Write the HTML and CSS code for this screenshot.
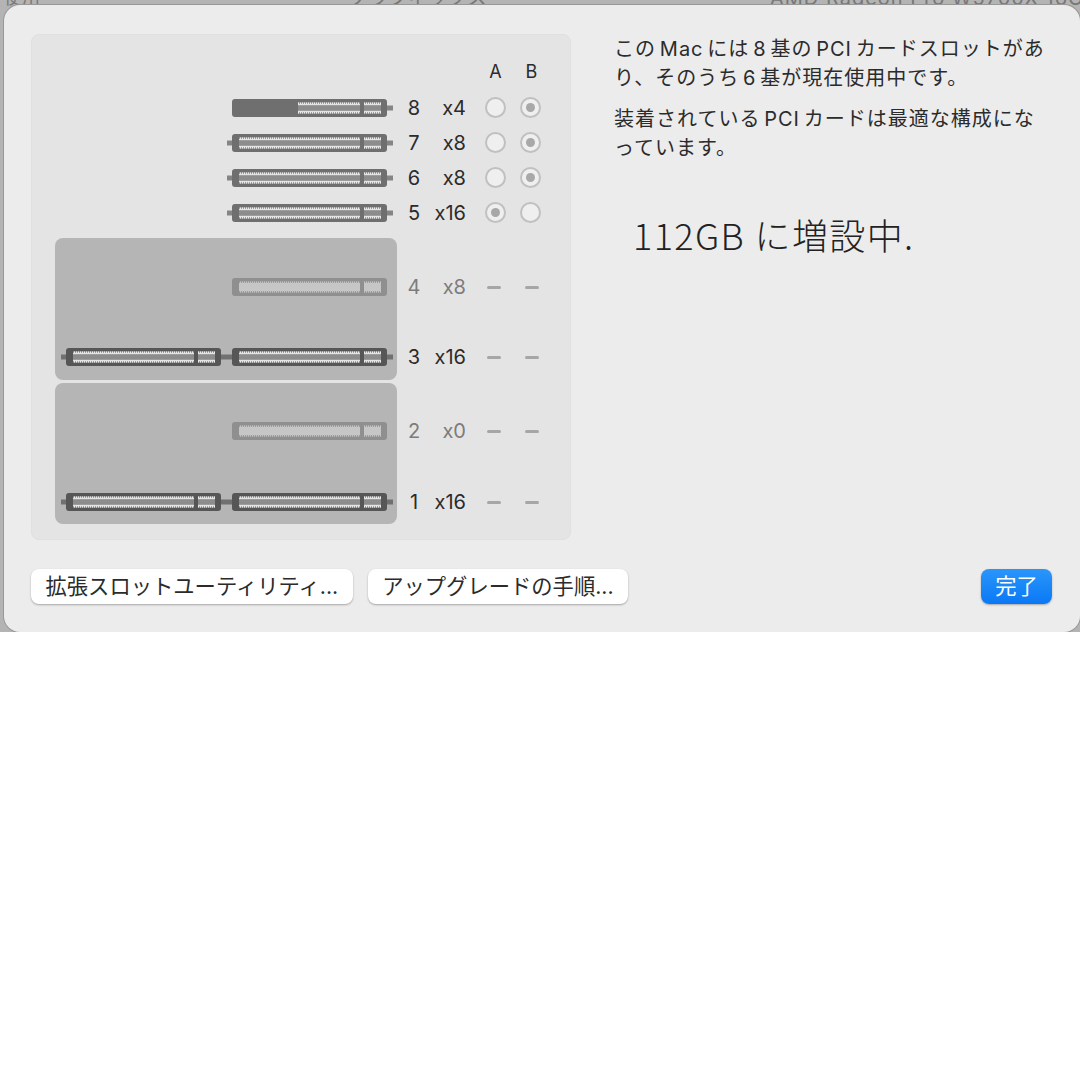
FILE: index.html
```html
<!DOCTYPE html>
<html lang="ja">
<head>
  <meta charset="UTF-8">
  <title>PCIカード</title>
  <link rel="stylesheet" href="styles.css">
</head>
<body>

<svg class="defs" width="0" height="0" aria-hidden="true">
  <defs>
    <pattern id="teeth" width="2" height="2" patternUnits="userSpaceOnUse">
      <rect width="1.2" height="2" fill="#ececec"/>
    </pattern>
    <pattern id="teeth-dim" width="2" height="2" patternUnits="userSpaceOnUse">
      <rect width="1.2" height="2" fill="#c6c6c6"/>
    </pattern>
    <g id="contacts">
      <rect x="7" y="3.5" width="121" height="11" fill="#8c8c8c"/>
      <rect x="7" y="5" width="121" height="1.2" fill="#e2e2e2"/>
      <rect x="7" y="11.8" width="121" height="1.2" fill="#e2e2e2"/>
      <rect x="7" y="3.4" width="121" height="1.8" fill="url(#teeth)"/>
      <rect x="7" y="12.8" width="121" height="1.8" fill="url(#teeth)"/>
    </g>
    <g id="contacts-short">
      <rect x="132" y="3.5" width="17" height="11" fill="#8c8c8c"/>
      <rect x="132" y="5" width="17" height="1.2" fill="#e2e2e2"/>
      <rect x="132" y="11.8" width="17" height="1.2" fill="#e2e2e2"/>
      <rect x="132" y="3.4" width="17" height="1.8" fill="url(#teeth)"/>
      <rect x="132" y="12.8" width="17" height="1.8" fill="url(#teeth)"/>
    </g>
    <g id="slot-light">
      <rect x="-5" y="6.5" width="166" height="5" fill="#858585"/>
      <rect width="155" height="18" rx="3" fill="#6f6f6f"/>
      <use href="#contacts"/>
      <use href="#contacts-short"/>
    </g>
    <g id="slot-dark">
      <rect x="-5" y="6.5" width="166" height="5" fill="#707070"/>
      <rect width="155" height="18" rx="3" fill="#565656"/>
      <use href="#contacts"/>
      <use href="#contacts-short"/>
    </g>
    <g id="slot-empty">
      <rect width="155" height="18" rx="3" fill="#8f8f8f"/>
      <rect x="7" y="5" width="121" height="8" fill="#c6c6c6"/>
      <rect x="7" y="3.4" width="121" height="1.8" fill="url(#teeth-dim)"/>
      <rect x="7" y="12.8" width="121" height="1.8" fill="url(#teeth-dim)"/>
      <rect x="132" y="5" width="17" height="8" fill="#c6c6c6"/>
      <rect x="132" y="3.4" width="17" height="1.8" fill="url(#teeth-dim)"/>
      <rect x="132" y="12.8" width="17" height="1.8" fill="url(#teeth-dim)"/>
    </g>
  </defs>
</svg>

<div class="backdrop">
  <div class="behind-text">
    <span class="behind-left">使用</span>
    <span class="behind-mid">グラフィックス</span>
    <span class="behind-right">AMD Radeon Pro W5700X 16GB</span>
  </div>

  <div class="dialog">
    <div class="main">
      <div class="slots">
        <div class="heads">
          <span>A</span>
          <span>B</span>
        </div>

        <div class="row">
          <div class="cards">
            <svg class="slot" width="166" height="18" viewBox="-5 0 166 18">
              <rect x="150" y="6.5" width="11" height="5" fill="#858585"/>
              <rect width="155" height="18" rx="3" fill="#6f6f6f"/>
              <rect x="66" y="3.5" width="62" height="11" fill="#8c8c8c"/>
              <rect x="66" y="5" width="62" height="1.2" fill="#e2e2e2"/>
              <rect x="66" y="11.8" width="62" height="1.2" fill="#e2e2e2"/>
              <rect x="66" y="3.4" width="62" height="1.8" fill="url(#teeth)"/>
              <rect x="66" y="12.8" width="62" height="1.8" fill="url(#teeth)"/>
              <use href="#contacts-short"/>
            </svg>
          </div>
          <span class="num">8</span><span class="lanes">x4</span>
          <span class="radio"></span><span class="radio on"></span>
        </div>

        <div class="row">
          <div class="cards">
            <svg class="slot" width="166" height="18" viewBox="-5 0 166 18"><use href="#slot-light"/></svg>
          </div>
          <span class="num">7</span><span class="lanes">x8</span>
          <span class="radio"></span><span class="radio on"></span>
        </div>

        <div class="row">
          <div class="cards">
            <svg class="slot" width="166" height="18" viewBox="-5 0 166 18"><use href="#slot-light"/></svg>
          </div>
          <span class="num">6</span><span class="lanes">x8</span>
          <span class="radio"></span><span class="radio on"></span>
        </div>

        <div class="row">
          <div class="cards">
            <svg class="slot" width="166" height="18" viewBox="-5 0 166 18"><use href="#slot-light"/></svg>
          </div>
          <span class="num">5</span><span class="lanes">x16</span>
          <span class="radio on"></span><span class="radio"></span>
        </div>

        <div class="mpx">
          <div class="tray"></div>
          <div class="row tall">
            <div class="cards">
              <svg class="slot" width="166" height="18" viewBox="-5 0 166 18"><use href="#slot-empty"/></svg>
            </div>
            <span class="num dim">4</span><span class="lanes dim">x8</span>
            <span class="dash"></span><span class="dash"></span>
          </div>
          <div class="row tall">
            <div class="cards">
              <svg class="slot" width="166" height="18" viewBox="-5 0 166 18"><use href="#slot-dark"/></svg>
              <svg class="slot" width="166" height="18" viewBox="-5 0 166 18"><use href="#slot-dark"/></svg>
            </div>
            <span class="num">3</span><span class="lanes">x16</span>
            <span class="dash"></span><span class="dash"></span>
          </div>
        </div>

        <div class="mpx second">
          <div class="tray"></div>
          <div class="row tall">
            <div class="cards">
              <svg class="slot" width="166" height="18" viewBox="-5 0 166 18"><use href="#slot-empty"/></svg>
            </div>
            <span class="num dim">2</span><span class="lanes dim">x0</span>
            <span class="dash"></span><span class="dash"></span>
          </div>
          <div class="row tall">
            <div class="cards">
              <svg class="slot" width="166" height="18" viewBox="-5 0 166 18"><use href="#slot-dark"/></svg>
              <svg class="slot" width="166" height="18" viewBox="-5 0 166 18"><use href="#slot-dark"/></svg>
            </div>
            <span class="num">1</span><span class="lanes">x16</span>
            <span class="dash"></span><span class="dash"></span>
          </div>
        </div>
      </div>

      <div class="info">
        <p>この Mac には 8 基の PCI カードスロットがあ<br>り、そのうち 6 基が現在使用中です。</p>
        <p>装着されている PCI カードは最適な構成にな<br>っています。</p>
        <p class="note">112GB に増設中.</p>
      </div>
    </div>

    <div class="footer">
      <button class="btn">拡張スロットユーティリティ...</button>
      <button class="btn">アップグレードの手順...</button>
      <button class="btn primary">完了</button>
    </div>
  </div>
</div>

</body>
</html>
```

FILE: styles.css
```css
* {
  margin: 0;
  padding: 0;
  box-sizing: border-box;
}

body {
  background: white;
  font-family: "Inter", "Noto Sans CJK JP", sans-serif;
  color: #2b2b2b;
}

.defs {
  position: absolute;
}

.backdrop {
  position: relative;
  height: 632px;
  padding: 5px 0 0 4px;
  background: #b4b4b4;
  overflow: hidden;
}

.behind-text {
  position: absolute;
  top: -14px;
  left: 0;
  width: 1080px;
  height: 20px;
  font-size: 20px;
  line-height: 24px;
  color: #777;
}

.behind-left {
  position: absolute;
  left: 4px;
  font-size: 18px;
}

.behind-mid {
  position: absolute;
  left: 348px;
}

.behind-right {
  position: absolute;
  left: 770px;
  letter-spacing: 1px;
  white-space: nowrap;
}

.dialog {
  position: relative;
  height: 627px;
  padding: 29px 28px 0 27px;
  background: #ececec;
  border-radius: 16px;
  box-shadow: 0 0 0 1px #989898;
}

.main {
  display: flex;
  gap: 43px;
}

.slots {
  width: 540px;
  height: 506px;
  flex-shrink: 0;
  padding: 27px 0 0 23px;
  background: #e4e4e4;
  border: 1px solid #e0e0e0;
  border-radius: 8px;
}

.heads {
  display: grid;
  grid-template-columns: 21px 21px;
  justify-content: start;
  column-gap: 15px;
  margin-left: 430px;
  height: 20px;
  font-size: 18px;
  line-height: 20px;
  text-align: center;
}

.row {
  display: grid;
  grid-template-columns: 342px 34px 35px 40px 35px;
  align-items: center;
  height: 35px;
  font-size: 20px;
  line-height: 24px;
}

.heads + .row {
  margin-top: 8px;
}

.row.tall {
  height: 70px;
}

.cards {
  display: flex;
  justify-content: flex-end;
  align-items: center;
  padding-right: 4px;
}

.slot {
  display: block;
}

.num {
  text-align: center;
}

.lanes {
  text-align: right;
}

.dim {
  color: #7c7c7c;
}

.radio {
  justify-self: end;
  width: 21px;
  height: 21px;
  border: 2px solid #c0c0c0;
  border-radius: 50%;
  background: #efefef;
  position: relative;
}

.radio.on::after {
  content: "";
  position: absolute;
  top: 4px;
  left: 4px;
  width: 9px;
  height: 9px;
  border-radius: 50%;
  background: #a8a8a8;
}

.dash {
  justify-self: end;
  width: 14px;
  height: 3px;
  margin-right: 5px;
  border-radius: 2px;
  background: #a6a6a6;
}

.dash + .dash {
  margin-right: 2px;
}

.mpx {
  position: relative;
  margin-top: 8px;
  padding-top: 14px;
}

.mpx.second {
  margin-top: -9px;
  padding-top: 13px;
}

.mpx.second .tall + .tall {
  margin-top: 1px;
}

.tray {
  position: absolute;
  top: 0;
  left: 0;
  width: 342px;
  height: 142px;
  background: #b5b5b5;
  border-radius: 8px;
}

.mpx.second .tray {
  height: 141px;
}

.mpx .row {
  position: relative;
}

.info {
  padding-top: 1px;
  font-size: 20px;
  line-height: 29px;
  width: 436px;
  letter-spacing: 1px;
  word-spacing: -2.8px;
}

.info p {
  margin-bottom: 12px;
  white-space: nowrap;
}

.info p.note {
  margin: 49px 0 0 19px;
  font-family: "Noto Sans CJK JP", sans-serif;
  font-weight: 300;
  font-size: 36px;
  line-height: 44px;
  letter-spacing: 1.4px;
  word-spacing: 0;
  color: #222;
}

.footer {
  display: flex;
  gap: 15px;
  margin-top: 29px;
}

.btn {
  height: 35px;
  padding: 0 14.5px 5px;
  border: none;
  border-radius: 8px;
  background: white;
  box-shadow: 0 1px 2px rgba(0, 0, 0, 0.3);
  font-family: "Inter", "Noto Sans CJK JP", sans-serif;
  font-size: 21.3px;
  color: #2b2b2b;
}

.btn.primary {
  margin-left: auto;
  width: 71px;
  padding: 0 0 5px;
  background: linear-gradient(#2a96fb, #0a78f5);
  color: white;
}
```
